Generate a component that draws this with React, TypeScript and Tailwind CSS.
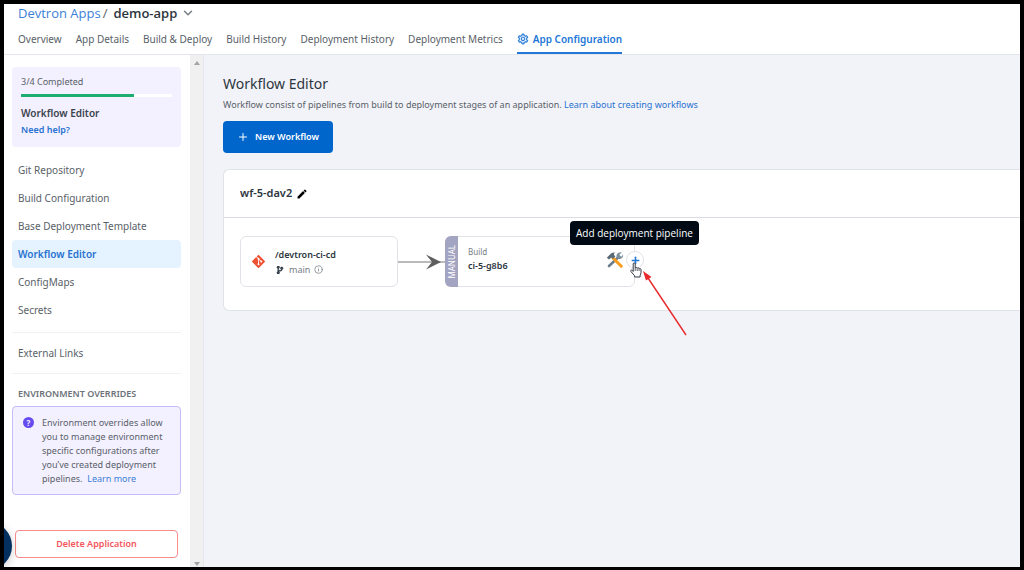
import { clsx } from 'clsx';
import { ChevronDown, Info, Plus } from 'lucide-react';
import { AiOutlineSetting } from 'react-icons/ai';
import { FaCodeBranch } from 'react-icons/fa';
import { MdEdit } from 'react-icons/md';
import { SiGit } from 'react-icons/si';

const TABS = [
  'Overview',
  'App Details',
  'Build & Deploy',
  'Build History',
  'Deployment History',
  'Deployment Metrics',
];

const CONFIG_LINKS = [
  'Git Repository',
  'Build Configuration',
  'Base Deployment Template',
  'Workflow Editor',
  'ConfigMaps',
  'Secrets',
];

function Header() {
  return (
    <header className="border-b border-[#e3e6ea] bg-white pl-3.5">
      <div className="flex h-[18px] items-center font-['Open_Sans',sans-serif] text-[13px] leading-[18px]">
        <a href="#apps" className="text-[#3b7fd6]">
          Devtron Apps
        </a>
        <span className="ml-0.5 text-[#596168]">/</span>
        <button type="button" className="ml-1.5 flex items-center gap-1 font-semibold text-[#2c3640]">
          demo-app
          <ChevronDown className="h-3.5 w-3.5 text-[#767d84]" strokeWidth={2.5} />
        </button>
      </div>
      <nav className="flex h-8 items-stretch gap-3.5 text-[10px] text-[#596168]">
        {TABS.map((tab) => (
          <a key={tab} href="#tab" className="flex items-center pt-0.5 whitespace-nowrap">
            {tab}
          </a>
        ))}
        <a
          href="#configuration"
          className="flex items-center gap-1 border-b-2 border-[#2277d8] pt-1 font-semibold whitespace-nowrap text-[#2277d8]"
        >
          <AiOutlineSetting className="h-3 w-3 stroke-current stroke-[30]" />
          App Configuration
        </a>
      </nav>
    </header>
  );
}

function ProgressCard() {
  return (
    <section className="rounded bg-[#f3f0ff] px-[9px] pt-[7px] pb-2">
      <div className="text-[9px] leading-4 text-[#596168]">3/4 Completed</div>
      <div className="mt-1 h-[3px] bg-white">
        <div className="h-full w-3/4 bg-[#1dad70]" />
      </div>
      <h2 className="mt-2 text-[10px] leading-4 font-semibold text-[#3b444c]">Workflow Editor</h2>
      <a href="#help" className="block text-[9px] leading-[18px] font-semibold text-[#2772d0]">
        Need help?
      </a>
    </section>
  );
}

function ScrollBar() {
  return (
    <div className="flex w-[13px] flex-col items-center justify-between bg-[#f0f0f0] pt-1.5 pb-px">
      <svg viewBox="0 0 6 4" className="h-1 w-1.5 fill-[#a3a3a3]">
        <path d="M0 4 3 0l3 4z" />
      </svg>
      <svg viewBox="0 0 6 4" className="h-1 w-1.5 fill-[#a3a3a3]">
        <path d="M0 0h6L3 4z" />
      </svg>
    </div>
  );
}

function Sidebar() {
  return (
    <aside className="flex shrink-0 border-r border-[#e3e6ea] bg-white">
      <div className="flex w-[186px] flex-col pt-3 pr-[9px] pb-[9px] pl-2">
        <ProgressCard />
        <nav className="mt-[9px] text-[10px] text-[#596168]">
          {CONFIG_LINKS.map((label) => (
            <a
              key={label}
              href="#config"
              className={clsx(
                'flex h-7 items-center rounded px-1.5',
                label === 'Workflow Editor' && 'bg-[#e5f2ff] font-semibold text-[#2772d0]'
              )}
            >
              {label}
            </a>
          ))}
          <div className="mt-2 border-y border-[#f0f1f3] py-1.5">
            <a href="#links" className="flex h-7 items-center px-1.5">
              External Links
            </a>
          </div>
        </nav>
        <h3 className="mt-3 px-1.5 text-[9px] leading-4 font-semibold text-[#6b7279]">
          ENVIRONMENT OVERRIDES
        </h3>
        <div className="mt-1 flex gap-2 rounded-sm border border-[#c5bcf8] bg-[#f3f0ff] px-2.5 pt-[9px] pb-2 text-[9px] leading-[14px] text-[#596168]">
          <span className="mt-px flex h-[11px] w-[11px] shrink-0 items-center justify-center rounded-full bg-[#664bee] text-[8px] font-bold text-[#f3f0ff]">
            ?
          </span>
          <p className="whitespace-nowrap">
            Environment overrides allow
            <br />
            you to manage environment
            <br />
            specific configurations after
            <br />
            you’ve created deployment
            <br />
            pipelines.&nbsp;{' '}
            <a href="#learn" className="text-[#3b7fd6]">
              Learn more
            </a>
          </p>
        </div>
        <button
          type="button"
          className="mx-[3px] mt-auto h-7 rounded-sm border border-[#f88b8b] text-[9px] font-semibold text-[#f3565c]"
        >
          Delete Application
        </button>
      </div>
      <ScrollBar />
    </aside>
  );
}

function SourceNode() {
  return (
    <div className="flex h-[51px] w-[158px] items-center gap-2.5 rounded-md border border-[#e0e3e8] bg-white pl-[11px]">
      <SiGit className="h-[13px] w-[13px] text-[#f05133]" />
      <div>
        <div className="text-[9px] leading-4 font-semibold text-[#2c3640]">/devtron-ci-cd</div>
        <div className="flex items-center gap-1 text-[9px] leading-[14px] text-[#767d84]">
          <FaCodeBranch className="h-2 w-2.5 stroke-current stroke-[40] text-[#2c3640]" />
          main
          <Info className="h-[9px] w-[9px]" />
        </div>
      </div>
    </div>
  );
}

function Edge() {
  return (
    <svg viewBox="0 0 47 16" className="h-4 w-[47px]">
      <path d="M0 8h47" stroke="#767676" strokeWidth="1.2" />
      <path d="M28 .5 43 8l-15 7.500L34 8z" fill="#5f5f5f" />
    </svg>
  );
}

function ToolsIcon() {
  return (
    <svg viewBox="0 0 18 18" className="h-[18px] w-[18px]" fill="none">
      {/* wrench */}
      <path d="M3 15 12 6.500" stroke="#6b7f8e" strokeWidth="2.600" strokeLinecap="round" />
      <path
        d="M15.800 1.300 13.500 3.600l.8 1.600 1.600.3 1-2.200c.8 2.200-.5 4.600-2.900 4.700-2.300.1-4-1.800-3.400-4 .5-2 2.900-3.300 5.200-2.700z"
        fill="#7b8f9d"
      />
      {/* hammer */}
      <path d="m7 7 8.300 8.300" stroke="#f89c1c" strokeWidth="3" strokeLinecap="round" />
      <path
        d="M.8 6.700 4 3.600C5 2 6.800 1.200 9.500 1.500 8 2.200 7.700 3 8.300 4.200L9.400 5.400 6.800 8 5.300 6.500l-2.300 2z"
        fill="#596a76"
      />
    </svg>
  );
}

function HandCursor() {
  return (
    <svg viewBox="0 0 12 16" className="h-4 w-3">
      <path
        d="M3.200 9.500V2c0-1.600 2-1.600 2 0v4c.2-1 1.900-.9 2 .3.400-.9 1.800-.7 1.900.5.500-.7 1.900-.4 1.900.9v3.100c0 1-.6 1.600-.9 2.500V15H4.600v-1.200L1.100 9.700C.1 8.300 1.600 7.300 2.500 8.500z"
        fill="#fff"
        stroke="#333b45"
        strokeWidth="1"
        strokeLinejoin="round"
      />
      <path d="M5.200 6v3M7.200 6.500V9M9.100 7v2" stroke="#333b45" strokeWidth=".8" />
    </svg>
  );
}

function BuildNode() {
  return (
    <div className="relative flex h-[51px] w-[190px] rounded-md border border-[#e0e3e8] bg-white">
      <div className="-my-px -ml-px flex w-[13px] items-center justify-center rounded-l-md bg-[#a3a3c2]">
        <span className="rotate-180 text-[8px] leading-3 text-white [writing-mode:vertical-rl]">
          MANUAL
        </span>
      </div>
      <div className="flex flex-1 items-center justify-between px-2.5 pb-1">
        <div>
          <div className="text-[8px] leading-3 text-[#767d84]">Build</div>
          <div className="text-[9px] leading-4 font-semibold text-[#2c3640]">ci-5-g8b6</div>
        </div>
        <ToolsIcon />
      </div>

      <button
        type="button"
        aria-label="Add deployment pipeline"
        className="absolute top-3.5 -right-2.5 flex h-[18px] w-[18px] items-center justify-center rounded-full border border-[#e0e3e8] bg-white"
      >
        <Plus className="h-[11px] w-[11px] text-[#2277d8]" strokeWidth={3.5} />
      </button>
      <div
        role="tooltip"
        className="absolute -top-4 left-[124px] rounded-sm bg-[#000a14] px-1.5 font-['Open_Sans',sans-serif] text-[10px] leading-6 whitespace-nowrap text-white"
      >
        Add deployment pipeline
      </div>
      <div className="absolute top-[25px] -right-2">
        <HandCursor />
      </div>
      {/* pointer to the add button */}
      <svg viewBox="0 0 46 68" className="absolute top-[33px] left-[196px] h-[68px] w-[46px]">
        <path d="m4 5 40 60" stroke="#e8292c" strokeWidth="1.400" />
        <path d="M1 1 9.500 7 4 10.500z" fill="#e8292c" />
      </svg>
    </div>
  );
}

function WorkflowCard() {
  return (
    <section className="mt-4 rounded-l-md border border-r-0 border-[#e0e3e8] bg-white">
      <div className="flex h-12 items-center gap-1 border-b border-[#d9dde3] pl-4">
        <h2 className="text-[11px] font-semibold text-[#2c3640]">wf-5-dav2</h2>
        <button type="button" aria-label="Edit workflow name">
          <MdEdit className="h-3 w-3 text-black" />
        </button>
      </div>
      <div className="flex items-center pt-[18px] pb-[23px] pl-4">
        <SourceNode />
        <Edge />
        <BuildNode />
      </div>
    </section>
  );
}

export default function App() {
  return (
    <div className="relative flex min-h-screen flex-col overflow-hidden border-4 border-b-[3px] border-black bg-[#f2f3f8] font-['Noto_Sans',sans-serif]">
      <Header />
      <div className="flex flex-1">
        <Sidebar />
        <main className="min-w-0 flex-1 pt-[18px] pl-[19px]">
          <h1 className="text-[14px] leading-[22px] text-[#2c3640]">Workflow Editor</h1>
          <p className="mt-0.5 text-[9px] leading-4 text-[#596168]">
            Workflow consist of pipelines from build to deployment stages of an application.{' '}
            <a href="#workflows" className="text-[#2772d0]">
              Learn about creating workflows
            </a>
          </p>
          <button
            type="button"
            className="mt-2 flex h-8 items-center gap-1.5 rounded-sm bg-[#0066cc] px-3.5 text-[9px] font-semibold text-white"
          >
            <Plus className="h-3 w-3" />
            New Workflow
          </button>
          <WorkflowCard />
        </main>
      </div>
      {/* help launcher, mostly off screen */}
      <div className="absolute bottom-[-3px] -left-10 h-12 w-12 rounded-full bg-[#03305f] shadow-[0_2px_10px_rgba(0,0,0,0.2)]" />
    </div>
  );
}
